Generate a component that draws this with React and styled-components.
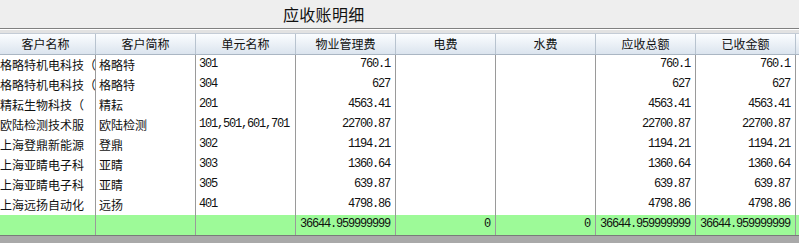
import React from 'react';
import styled, { createGlobalStyle } from 'styled-components';

const GlobalStyle = createGlobalStyle`
  body {
    margin: 0;
    background-color: #eeeeee;
    font-family: 'Noto Sans CJK SC', sans-serif;
  }
`;

const Page = styled.div`
  width: 799px;
  height: 243px;
  overflow: hidden;
  display: flex;
  flex-direction: column;
  background-color: #a9a9a9;
`;

const TitleBar = styled.div`
  height: 28px;
  flex-shrink: 0;
  display: flex;
  align-items: center;
  padding-left: 283px;
  background-color: #eeeeee;
  border-bottom: 1px solid #808080;
`;

const Title = styled.h1`
  margin: 0;
  font-size: 16px;
  font-weight: normal;
  color: #111;
  letter-spacing: 0.3px;
`;

const Groove = styled.div`
  height: 4px;
  flex-shrink: 0;
  background-color: #e2e2e2;
  border-top: 1px solid #ffffff;
  box-sizing: border-box;
`;

const Viewport = styled.div`
  overflow: hidden;
  flex-shrink: 0;
  border-bottom: 1px solid #7a7a7a;
`;

const Grid = styled.div`
  margin-left: -4px;
  width: 900px;
  display: flex;
  flex-direction: column;
`;

const Row = styled.div`
  display: flex;
  height: ${(p) => p.$height}px;
  background: ${(p) => p.$bg};
  box-sizing: border-box;
`;

const HeaderRow = styled(Row)`
  background: linear-gradient(#fbfdff, #dbe4ee);
  border-top: 1px solid #c4ccd6;
  border-bottom: 1px solid #aab6c3;
`;

const HeadCell = styled.div`
  width: 100px;
  box-sizing: border-box;
  border-right: 1px solid #b8c3cf;
  display: flex;
  align-items: center;
  justify-content: center;
  font-size: 12px;
  color: #111;
  padding-bottom: 1px;
`;

const Cell = styled.div`
  width: 100px;
  box-sizing: border-box;
  border-right: 1px solid #9a9a9a;
  display: flex;
  align-items: center;
  justify-content: ${(p) => (p.$num ? 'flex-end' : 'flex-start')};
  padding: 0 5px 2px ${(p) => (p.$first ? 4 : 3)}px;
  overflow: hidden;
  white-space: nowrap;
  color: #111;
  font-size: ${(p) => (p.$mono ? '12px' : '12px')};
  font-family: ${(p) =>
    p.$mono ? "'Liberation Mono', monospace" : "'Noto Sans CJK SC', sans-serif"};
  letter-spacing: ${(p) => (p.$mono ? '-1.2px' : '0')};
`;

const columns = ['客户名称', '客户简称', '单元名称', '物业管理费', '电费', '水费', '应收总额', '已收金额', ''];

const rows = [
  ['格略特机电科技（', '格略特', '301', '760.1', '', '', '760.1', '760.1'],
  ['格略特机电科技（', '格略特', '304', '627', '', '', '627', '627'],
  ['精耘生物科技（', '精耘', '201', '4563.41', '', '', '4563.41', '4563.41'],
  ['欧陆检测技术服', '欧陆检测', '101,501,601,701', '22700.87', '', '', '22700.87', '22700.87'],
  ['上海登鼎新能源', '登鼎', '302', '1194.21', '', '', '1194.21', '1194.21'],
  ['上海亚睛电子科', '亚睛', '303', '1360.64', '', '', '1360.64', '1360.64'],
  ['上海亚睛电子科', '亚睛', '305', '639.87', '', '', '639.87', '639.87'],
  ['上海远扬自动化', '远扬', '401', '4798.86', '', '', '4798.86', '4798.86'],
];

const totals = ['', '', '', '36644.959999999', '0', '0', '36644.959999999', '36644.959999999'];

function App() {
  return (
    <>
      <GlobalStyle />
      <Page>
        <TitleBar>
          <Title>应收账明细</Title>
        </TitleBar>
        <Groove />
        <Viewport>
          <Grid>
            <HeaderRow $height={22}>
              {columns.map((c, i) => (
                <HeadCell key={i}>{c}</HeadCell>
              ))}
            </HeaderRow>
            {rows.map((r, ri) => (
              <Row key={ri} $height={20} $bg="#ffffff">
                {r.map((v, ci) => (
                  <Cell key={ci} $first={ci === 0} $num={ci >= 3} $mono={ci >= 2}>
                    {v}
                  </Cell>
                ))}
                <Cell />
              </Row>
            ))}
            <Row $height={20} $bg="#9dfa98">
              {totals.map((v, ci) => (
                <Cell key={ci} $num={ci >= 3} $mono>
                  {v}
                </Cell>
              ))}
              <Cell />
            </Row>
          </Grid>
        </Viewport>
      </Page>
    </>
  );
}

export default App;
